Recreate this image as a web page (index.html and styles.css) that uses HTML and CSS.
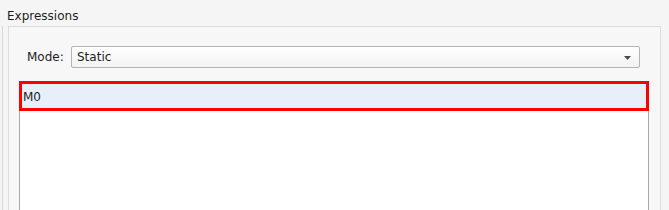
FILE: index.html
```html
<!DOCTYPE html>
<html>
<head>
<meta charset="utf-8">
<link rel="stylesheet" href="styles.css">
</head>
<body>
<div class="group">
  <div class="title">Expressions</div>
  <div class="frame">
    <div class="panel">
      <div class="mode-row">
        <span class="label">Mode:</span>
        <div class="combo">
          <span class="combo-text">Static</span>
          <svg class="arrow" width="7" height="4" viewBox="0 0 7 4"><polygon points="0,0 7,0 3.5,4" fill="#4a4a4a"/></svg>
        </div>
      </div>
      <div class="list">
        <div class="item selected">M0</div>
      </div>
    </div>
  </div>
</div>
</body>
</html>
```
FILE: styles.css
```css
html, body {
  margin: 0;
  padding: 0;
  background: #f5f5f5;
  font-family: "DejaVu Sans", "Liberation Sans", sans-serif;
  font-size: 12px;
  color: #1e1e1e;
  overflow: hidden;
}
.group {
  width: 669px;
  height: 210px;
  display: flex;
  flex-direction: column;
}
.title {
  padding: 9px 0 3px 7px;
  line-height: 14px;
  height: 14px;
}
.frame {
  flex: 1;
  margin-left: 2px;
  border-left: 1px solid #d6d6d6;
  padding-left: 5px;
  display: flex;
}
.panel {
  background: #f7f7f7;
  border: 1px solid #dcdcdc;
  border-bottom: none;
  padding: 19px 11px 0 10px;
  display: flex;
  flex-direction: column;
  box-sizing: border-box;
  width: 653px;
}
.mode-row {
  display: flex;
  align-items: center;
  padding: 0 9px 0 8px;
  gap: 8px;
}
.label {
  line-height: 14px;
  width: 36px;
}
.combo {
  flex: 1;
  height: 22px;
  box-sizing: border-box;
  border: 1px solid #b4b4b4;
  border-radius: 2px;
  background: linear-gradient(#ffffff, #f2f2f2);
  display: flex;
  align-items: center;
  justify-content: space-between;
  padding: 0 8px 0 5px;
}
.combo-text {
  line-height: 14px;
}
.arrow {
  display: block;
  margin-top: 1px;
}
.list {
  margin-top: 13px;
  flex: 1;
  background: #ffffff;
  border: 1px solid #a8a8a8;
  border-bottom: none;
}
.item {
  margin: -1px -1px 0 -1px;
  height: 30px;
  box-sizing: border-box;
  line-height: 14px;
}
.item.selected {
  border: 3px solid #ff0000;
  background: #e7f0f9;
  padding: 6px 0 0 1px;
}
```
